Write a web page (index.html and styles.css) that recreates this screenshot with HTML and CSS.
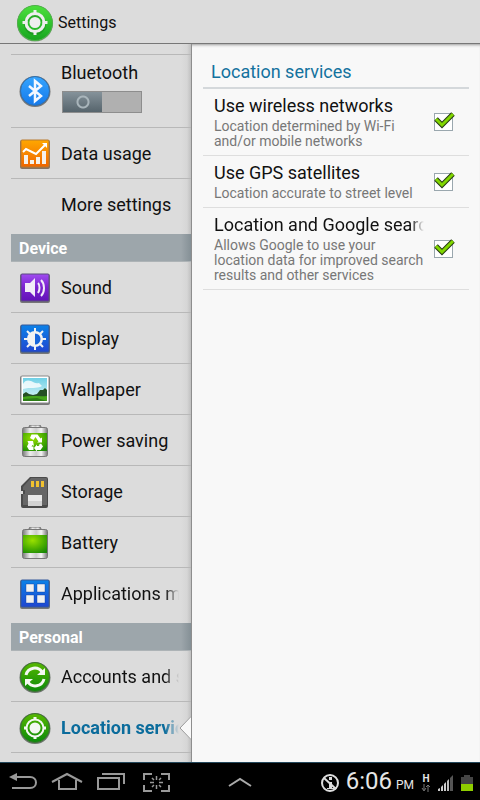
FILE: index.html
```html
<!DOCTYPE html>
<html lang="en">
<head>
<meta charset="utf-8">
<meta name="viewport" content="width=device-width, initial-scale=1">
<title>Settings</title>
<link rel="stylesheet" href="styles.css">
</head>
<body>
<svg class="defs" aria-hidden="true">
  <defs>
    <linearGradient id="green" x1="0" y1="0" x2="0" y2="1"><stop offset="0" stop-color="#58b800"/><stop offset="1" stop-color="#0a8a0a"/></linearGradient>
    <linearGradient id="lime" x1="0" y1="0" x2="0" y2="1"><stop offset="0" stop-color="#4be03c"/><stop offset="1" stop-color="#17a51f"/></linearGradient>
    <linearGradient id="sky" x1="0" y1="0" x2="0" y2="1"><stop offset="0" stop-color="#35a5ff"/><stop offset="1" stop-color="#1579ea"/></linearGradient>
    <linearGradient id="blue" x1="0" y1="0" x2="0" y2="1"><stop offset="0" stop-color="#0b82e8"/><stop offset="1" stop-color="#2046d0"/></linearGradient>
    <linearGradient id="orange" x1="0" y1="0" x2="0" y2="1"><stop offset="0" stop-color="#ffa800"/><stop offset="1" stop-color="#ef6400"/></linearGradient>
    <linearGradient id="purple" x1="0" y1="0" x2="0" y2="1"><stop offset="0" stop-color="#a04cf0"/><stop offset=".5" stop-color="#7a22cf"/><stop offset="1" stop-color="#6212b8"/></linearGradient>
    <linearGradient id="metal" x1="0" y1="0" x2="1" y2="0"><stop offset="0" stop-color="#777"/><stop offset=".3" stop-color="#eee"/><stop offset=".55" stop-color="#ccc"/><stop offset=".75" stop-color="#f4f4f4"/><stop offset="1" stop-color="#777"/></linearGradient>
    <radialGradient id="charge" cx=".4" cy=".3" r=".8"><stop offset="0" stop-color="#9ae000"/><stop offset=".6" stop-color="#4cae00"/><stop offset="1" stop-color="#1c8a06"/></radialGradient>
    <linearGradient id="air" x1="0" y1="0" x2="0" y2="1"><stop offset="0" stop-color="#6fd0e6"/><stop offset="1" stop-color="#e4f8f8"/></linearGradient>
  </defs>
</svg>

<header class="topbar">
  <svg class="topbar-icon" viewBox="0 0 38 38" aria-hidden="true">
    <circle cx="19" cy="19.500" r="18" fill="#7c9c78"/>
    <circle cx="19" cy="19" r="17.500" fill="url(#lime)" stroke="#4fb04a"/>
    <circle cx="19" cy="20" r="9" fill="none" stroke="#16851c" stroke-width="4" opacity=".5"/>
    <g fill="none" stroke="#eee"><circle cx="19" cy="18.500" r="9" stroke-width="3"/><path d="M19 6v5M19 26v5M6.500 18.500h5M26.500 18.500h5" stroke-width="3"/></g>
    <circle cx="19" cy="18.500" r="5.500" fill="#eee"/>
  </svg>
  <h1>Settings</h1>
</header>

<main class="panes">
  <nav class="sidebar" aria-label="Settings">
    <ul class="group">
      <li class="row row-tall">
        <svg class="icon" viewBox="0 0 32 32" aria-hidden="true"><circle cx="16" cy="16.500" r="15.500" fill="#777"/><circle cx="16" cy="16" r="14.500" fill="url(#sky)" stroke="#356fa8"/><path d="M10 11l12 10-6 5V6l6 5-12 10" fill="none" stroke="#f4f8ff" stroke-width="2.500"/></svg>
        <div class="stack">
          <label for="bluetooth">Bluetooth</label>
          <input class="switch" type="checkbox" role="switch" id="bluetooth">
        </div>
      </li>
      <li><a class="row" href="#data">
        <svg class="icon" viewBox="0 0 32 32" aria-hidden="true"><rect x="1" y="2" width="30" height="29" rx="2" fill="#867363"/><rect x="2" y="2" width="28" height="27" rx="1" fill="url(#orange)" stroke="#b87a30"/><path d="M5 17h4v9H5zM11 22h4v4h-4zM17 19h4v7h-4zM23 13h4v13h-4z" fill="#f5f1ea"/><path d="M4 14l3-3 10 5 9-9" fill="none" stroke="#fff" stroke-width="2"/><path d="M23 5h5v5z" fill="#fff"/></svg>
        <span class="label">Data usage</span></a></li>
      <li><a class="row" href="#more"><span class="icon"></span><span class="label">More settings</span></a></li>
    </ul>

    <h2>Device</h2>
    <ul class="group">
      <li><a class="row" href="#sound">
        <svg class="icon" viewBox="0 0 32 32" aria-hidden="true"><rect x="1" y="2" width="30" height="29" rx="2" fill="#777"/><rect x="2" y="2" width="28" height="27" rx="1" fill="url(#purple)" stroke="#5a4a80"/><path d="M6 11h5l5-5v19l-5-5H6z" fill="#f2ecf8"/><path d="M19 11c2 2 2 7 0 10M22 8c4 4 4 12 0 16" fill="none" stroke="#f2ecf8" stroke-width="2"/></svg>
        <span class="label">Sound</span></a></li>
      <li><a class="row" href="#display">
        <svg class="icon" viewBox="0 0 32 32" aria-hidden="true"><rect x="1" y="2" width="30" height="29" rx="2" fill="#777"/><rect x="2" y="2" width="28" height="27" rx="1" fill="url(#blue)" stroke="#34589a"/><path d="M16 5v22M5 16h22M8 8l16 16M24 8L8 24" stroke="#f2f2f2" stroke-width="2"/><circle cx="16" cy="16" r="8" fill="#f2f2f2"/><path d="M16 10.500a5.500 5.500 0 0 1 0 11z" fill="#1764db"/></svg>
        <span class="label">Display</span></a></li>
      <li><a class="row" href="#wallpaper">
        <svg class="icon" viewBox="0 0 32 32" aria-hidden="true"><rect x="1" y="2" width="30" height="29" rx="2" fill="#777"/><rect x="2" y="2" width="28" height="27" rx="1" fill="#fff" stroke="#888"/><path d="M4 4h24v23H4z" fill="url(#air)"/><path d="M4 10c2-4 5-4 8-3s4 3 8 2l3 3c-5 3-12 1-19 3z" fill="#fff" opacity=".8"/><path d="M4 20l3-2 3 2 4 1 4-1 3-4 3 0 2-2 2 2v8H4z" fill="#254f24"/><path d="M4 23c8-2 16 0 24-1v5H4z" fill="#46a51c"/><path d="M4 25l14-1 10 3H4z" fill="#2d7d16"/></svg>
        <span class="label">Wallpaper</span></a></li>
      <li><a class="row" href="#power">
        <svg class="icon" viewBox="0 0 32 32" aria-hidden="true"><rect x="10" y="0" width="12" height="5" rx="2" fill="url(#metal)" stroke="#777"/><rect x="3.500" y="2.500" width="25" height="29" rx="2" fill="url(#metal)" stroke="#777"/><path d="M4 8h24v18H4z" fill="url(#charge)"/><g fill="#fff"><path d="M12.500 9.500h6l3 4 1.500-1v5h-5l1.500-1-3-4.500-2 3-3.500-2z"/><path d="M22 18.500l2 3-2.500 3.500h-3.500v1.500l-3-3.500 3-3.500v1.500h2.500l-1-1z"/><path d="M8.500 16h5.500l1 5-1.500-1-1 1.500h2v3.500h-4.500L8 21.500l1.500-3z"/></g></svg>
        <span class="label">Power saving</span></a></li>
      <li><a class="row" href="#storage">
        <svg class="icon" viewBox="0 0 32 32" aria-hidden="true"><path d="M11 1h16q2 0 2 2v27q0 2-2 2H4q-2 0-2-2V18h2v-3H2v-5z" fill="#4b4b4b"/><path d="M12 2h15q1 0 1 1v26H4V18h2v-4H4v-3z" fill="#666"/><path d="M12 5h3v6h-3zM17 5h3v6h-3zM22 5h3v6h-3z" fill="#f2c230"/><path d="M9 19h14v11H9z" fill="#e9e9e9"/><path d="M9 25h14v5H9z" fill="#d2d2d2"/></svg>
        <span class="label">Storage</span></a></li>
      <li><a class="row" href="#battery">
        <svg class="icon" viewBox="0 0 32 32" aria-hidden="true"><rect x="10" y="0" width="12" height="5" rx="2" fill="url(#metal)" stroke="#777"/><rect x="3.500" y="2.500" width="25" height="29" rx="2" fill="url(#metal)" stroke="#777"/><path d="M4 8h24v18H4z" fill="url(#charge)"/></svg>
        <span class="label">Battery</span></a></li>
      <li><a class="row" href="#apps">
        <svg class="icon" viewBox="0 0 32 32" aria-hidden="true"><rect x="1" y="2" width="30" height="29" rx="2" fill="#777"/><rect x="2" y="2" width="28" height="27" rx="1" fill="url(#blue)" stroke="#34589a"/><path d="M7 6h8v8H7zM18 6h8v8h-8zM7 17h8v8H7zM18 17h8v8h-8z" fill="#f0f0f0" stroke="#0a3a9a" stroke-opacity=".4"/></svg>
        <span class="label label-long">Applications manager</span></a></li>
    </ul>

    <h2>Personal</h2>
    <ul class="group">
      <li><a class="row" href="#accounts">
        <svg class="icon" viewBox="0 0 32 32" aria-hidden="true"><circle cx="16" cy="16.500" r="15.500" fill="#6b756b"/><circle cx="16" cy="16" r="14.500" fill="url(#green)" stroke="#3e7434"/><path d="M7 14c2-8 12-9 16-3M25 18c-2 8-12 9-16 3" fill="none" stroke="#f4f8f2" stroke-width="3"/><path d="M26 7v7h-8zM6 25v-7h8z" fill="#f4f8f2"/></svg>
        <span class="label label-long">Accounts and sync</span></a></li>
      <li><a class="row row-active" href="#location" aria-current="page">
        <svg class="icon" viewBox="0 0 32 32" aria-hidden="true"><circle cx="16" cy="16.500" r="15.500" fill="#6b756b"/><circle cx="16" cy="16" r="14.500" fill="url(#green)" stroke="#3e7434"/><g fill="none" stroke="#f4f8f2"><circle cx="16" cy="16" r="8.500" stroke-width="2"/><path d="M16 5v3M16 24v3M5 16h3M24 16h3" stroke-width="3"/></g><circle cx="16" cy="16" r="5.500" fill="#f4f8f2"/></svg>
        <span class="label label-long">Location services</span>
        <svg class="notch" viewBox="0 0 13 26" aria-hidden="true"><path d="M13 0v26L1 13z" fill="#f8f8f8"/><path d="M12.500 0v1L1 13l11.500 12v1" fill="none" stroke="#999"/></svg></a></li>
      <li><a class="row" href="#lock"><span class="icon"></span><span class="label">Lock screen</span></a></li>
    </ul>
  </nav>

  <section class="detail">
    <h2 class="detail-title">Location services</h2>
    <div class="option">
      <label for="wireless"><span class="name">Use wireless networks</span><span class="note">Location determined by Wi-Fi and/or mobile networks</span></label>
      <span class="check"><input type="checkbox" id="wireless" checked><svg viewBox="0 0 24 20" aria-hidden="true"><path d="M4 8l6 6L21 3" fill="none" stroke="#263a12" stroke-width="5"/><path d="M4 8l6 6L21 3" fill="none" stroke="#80d600" stroke-width="3"/></svg></span>
    </div>
    <div class="option">
      <label for="gps"><span class="name">Use GPS satellites</span><span class="note">Location accurate to street level</span></label>
      <span class="check"><input type="checkbox" id="gps" checked><svg viewBox="0 0 24 20" aria-hidden="true"><path d="M4 8l6 6L21 3" fill="none" stroke="#263a12" stroke-width="5"/><path d="M4 8l6 6L21 3" fill="none" stroke="#80d600" stroke-width="3"/></svg></span>
    </div>
    <div class="option">
      <label for="google"><span class="name name-long">Location and Google search</span><span class="note">Allows Google to use your location data for improved search results and other services</span></label>
      <span class="check"><input type="checkbox" id="google" checked><svg viewBox="0 0 24 20" aria-hidden="true"><path d="M4 8l6 6L21 3" fill="none" stroke="#263a12" stroke-width="5"/><path d="M4 8l6 6L21 3" fill="none" stroke="#80d600" stroke-width="3"/></svg></span>
    </div>
  </section>
</main>

<footer class="systembar">
  <div class="keys">
    <button type="button" aria-label="Back"><svg viewBox="0 0 32 22"><path d="M9 6h14c8 0 8 11 0 11H5" fill="none" stroke="#999" stroke-width="2"/><path d="M2 6l8-4v8z" fill="#999"/></svg></button>
    <button type="button" aria-label="Home"><svg viewBox="0 0 32 22"><path d="M1 11L16 3l15 8M8 9v9h17V9" fill="none" stroke="#999" stroke-width="2"/></svg></button>
    <button type="button" aria-label="Recent apps"><svg viewBox="0 0 32 22"><path d="M3 7h21v11H3zM7 3h22v10" fill="none" stroke="#999" stroke-width="2"/></svg></button>
    <button type="button" aria-label="Screenshot"><svg viewBox="0 0 32 22"><path d="M5 9V3h8M22 3h8v6M30 14v6h-8M13 20H5v-6" fill="none" stroke="#999" stroke-width="2"/><path d="M17.500 5v4M17.500 14v4M11 11.500h4M20 11.500h4M13 7l2 2M20 9l2-2M13 16l2-2M20 14l2 2" stroke="#999" stroke-width="1.500"/></svg></button>
  </div>
  <button class="tray" type="button" aria-label="Open tray"><svg viewBox="0 0 26 12"><path d="M2 10l11-7 11 7" fill="none" stroke="#aaa" stroke-width="2"/></svg></button>
  <div class="status">
    <svg class="blocked" viewBox="0 0 18 18" aria-hidden="true"><circle cx="9" cy="9" r="8" fill="none" stroke="#ddd" stroke-width="2"/><path d="M3 4l12 11" stroke="#ddd" stroke-width="2"/><path d="M8 3h3v3H8zM7 8h4v6h2v1H6v-1h2V9H7z" fill="#ddd"/></svg>
    <time datetime="18:06">6:06<small>PM</small></time>
    <span class="network"><b>H</b><svg viewBox="0 0 10 8" aria-hidden="true"><path d="M3 0v6M1 4l2 3 2-3M7 8V1M5 3l2-2 2 2" fill="none" stroke="#777"/></svg></span>
    <svg class="signal" viewBox="0 0 16 16" aria-hidden="true"><path d="M0 16v-2l2-1v3zM3 16v-4l2-2v6zM6 16V9l2-2v9z" fill="#ccc"/><path d="M9 16V6l2-2v12z" fill="#bbb"/><path d="M12 16V3l3-3v16z" fill="#555"/></svg>
    <svg class="charge" viewBox="0 0 12 16" aria-hidden="true"><path d="M3 0h6v2h3v14H0V2h3z" fill="#444"/><path d="M0 9h12v7H0z" fill="#8fce00"/></svg>
  </div>
</footer>
</body>
</html>
```
FILE: styles.css
```css
* { box-sizing: border-box; }

body {
  display: flex;
  flex-direction: column;
  height: 100vh;
  margin: 0;
  overflow: hidden;
  background: #dcdcdc;
  color: #111;
  font-family: Roboto, "Liberation Sans", sans-serif;
  font-size: 18px;
}

h1, h2, ul { margin: 0; padding: 0; }
ul { list-style: none; }
button { padding: 0; border: 0; background: none; }
svg { display: block; }
.defs { position: absolute; width: 0; height: 0; }

.topbar {
  display: flex;
  flex: none;
  align-items: center;
  gap: 4px;
  height: 44px;
  padding: 2px 0 0 16px;
  border-bottom: 1px solid #777;
}
.topbar-icon { width: 38px; height: 38px; }
.topbar h1 { font-size: 16px; font-weight: 400; }

.panes {
  display: grid;
  flex: 1;
  grid-template-columns: 2fr 3fr;
  min-height: 0;
  background: #f8f8f8;
  box-shadow: inset 0 3px 3px -2px #999;
}

.sidebar {
  position: relative;
  min-width: 0;
  padding: 10px 0 0 11px;
  overflow: hidden;
  border-right: 1px solid #8e8e8e;
  background: linear-gradient(to left, #c0c0c0, #d6d6d6 4px, #dcdcdc 10px);
}
.group { padding-bottom: 5px; }
.group li + li,
.group:first-child { border-top: 1px solid #b8b8b8; }
.row {
  position: relative;
  display: flex;
  align-items: center;
  gap: 10px;
  height: 50px;
  padding: 2px 12px 0 8px;
  color: inherit;
  text-decoration: none;
}
.row-tall { height: 72px; padding-top: 0; }
.row-active { color: #0b6c9c; font-weight: 700; }
.icon { flex: none; width: 32px; height: 32px; }
.label {
  flex: 1;
  overflow: hidden;
  line-height: 24px;
  white-space: nowrap;
}
.label-long { mask-image: linear-gradient(to left, transparent, #000 14px); }
.stack {
  display: flex;
  flex-direction: column;
  gap: 8px;
  padding-bottom: 6px;
  line-height: 20px;
}
.sidebar h2 {
  height: 28px;
  padding-left: 8px;
  border-bottom: 1px solid #adb3b6;
  background: linear-gradient(to left, #859096, #9da6ab 10px);
  color: #fff;
  font-size: 16px;
  line-height: 29px;
}
.notch { position: absolute; right: -1px; width: 13px; height: 26px; }

.switch {
  width: 80px;
  height: 22px;
  margin: 0 0 0 1px;
  appearance: none;
  border: 1px solid #8d8d8d;
  background:
    radial-gradient(circle at 20px 10px, transparent 4px, #a9b5bb 5px, #a9b5bb 6px, transparent 7px),
    linear-gradient(to right, transparent 39px, #b0b0b0 39px),
    linear-gradient(#85929a, #56646c);
}

.detail { min-width: 0; padding: 14px 11px; }
.detail-title {
  height: 31px;
  padding-left: 8px;
  border-bottom: 2px solid #d4d8db;
  color: #13729e;
  font-size: 18px;
  font-weight: 400;
  line-height: 28px;
}
.option {
  display: flex;
  align-items: center;
  gap: 8px;
  padding: 6px 13px 6px 11px;
  border-bottom: 1px solid #dedede;
}
.option label { flex: 1; min-width: 0; }
.name, .note { display: block; }
.name {
  margin-bottom: 2px;
  overflow: hidden;
  line-height: 22px;
  white-space: nowrap;
}
.name-long { mask-image: linear-gradient(to left, transparent, #000 14px); }
.note { color: #777; font-size: 14px; line-height: 15px; }
.check { position: relative; flex: none; width: 24px; height: 22px; }
.check input {
  display: block;
  width: 19px;
  height: 18px;
  margin: 2px 0 0 2px;
  appearance: none;
  border: 1px solid #9aa7ae;
  background: #fff;
}
.check svg {
  position: absolute;
  top: 0;
  left: 0;
  width: 24px;
  height: 20px;
  pointer-events: none;
}
.check input:not(:checked) + svg { display: none; }

.systembar {
  display: grid;
  flex: none;
  grid-template-columns: 1fr auto 1fr;
  align-items: center;
  height: 38px;
  padding: 0 7px;
  border-top: 1px solid #24485c;
  background: #000;
  color: #e6e6e6;
}
.keys { display: flex; gap: 12px; }
.keys svg { width: 32px; height: 22px; }
.tray svg { width: 26px; height: 12px; }
.status {
  display: flex;
  align-items: center;
  justify-content: flex-end;
  gap: 7px;
  padding-top: 2px;
}
.status time { font-size: 24px; line-height: 28px; }
.status small { margin-left: 4px; font-size: 12px; }
.blocked { width: 18px; height: 18px; }
.network { display: grid; justify-items: center; font-size: 10px; line-height: 10px; }
.network svg { width: 10px; height: 8px; }
.signal { width: 16px; height: 16px; }
.charge { width: 12px; height: 16px; }
```
